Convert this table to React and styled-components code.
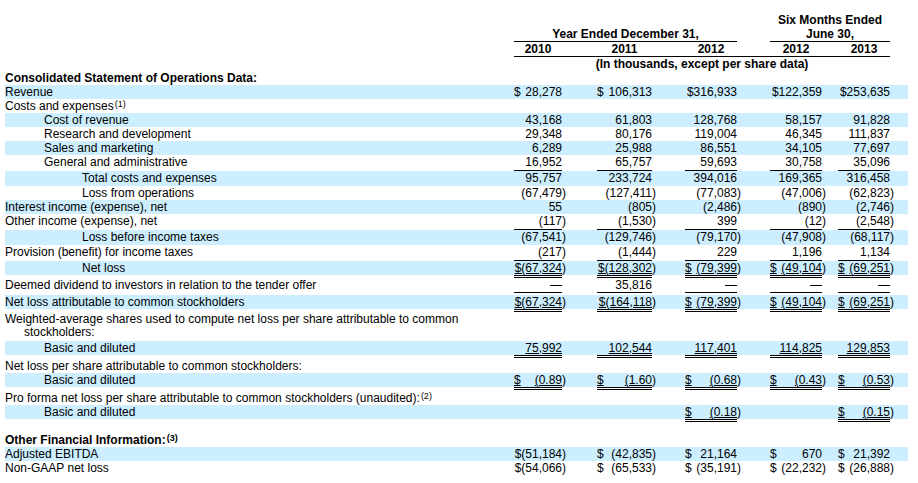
import React from 'react';
import styled, { createGlobalStyle } from 'styled-components';

const GlobalStyle = createGlobalStyle`
  body {
    margin: 0;
    background: #ffffff;
    color: #000000;
    font-family: "Liberation Sans", Arial, Helvetica, sans-serif;
    font-size: 12px;
  }
`;

// label column + five figure columns (each holds its figure box and the gap after it)
const COLS = '509px 83px 88px 85px 68px 70px';
const BOX = [48, 55, 52, 52, 52];

const Sheet = styled.div`
  width: 903px;
  margin-left: 5px;
  padding-top: 13px;
`;

const HeadRow = styled.div`
  display: grid;
  grid-template-columns: ${COLS};
  line-height: 14px;
  font-weight: 700;
`;

const HeadCell = styled.div`
  grid-column: ${p => p.$span};
  margin-right: ${p => p.$mr || 0}px;
  text-align: center;
  white-space: nowrap;
  border-bottom: ${p => (p.$rule ? '1px solid #000' : 'none')};
`;

const YearStrip = styled.div`
  grid-column: 2 / 7;
  margin-right: 18px;
  display: grid;
  grid-template-columns: 83px 88px 85px 68px 52px;
  border-bottom: 1px solid #000;
`;

const Year = styled.div`
  width: ${p => p.$w}px;
  text-align: center;
`;

const Row = styled.div`
  display: grid;
  grid-template-columns: ${COLS};
  align-items: start;
  line-height: 14px;
  margin-top: ${p => p.$mt || 0}px;
  margin-bottom: ${p => p.$mb || 0}px;
  padding-bottom: ${p => p.$pb || 0}px;
  background: ${p =>
    p.$band ? `linear-gradient(#cceeff, #cceeff) top left / 100% ${14 + (p.$pb || 0)}px no-repeat` : 'none'};
`;

const Label = styled.div`
  padding-left: ${p => [0, 39, 77][p.$indent || 0]}px;
  font-weight: ${p => (p.$bold ? 700 : 400)};
  white-space: nowrap;
`;

const WrapLabel = styled.div`
  line-height: 13px;
  white-space: nowrap;
`;

const Continued = styled.span`
  display: inline-block;
  padding-left: 19px;
`;

const Note = styled.sup`
  font-size: 9px;
  line-height: 0;
  vertical-align: 3px;
  margin-left: 1px;
`;

const Cell = styled.div`
  display: flex;
  align-items: flex-start;
`;

const Figure = styled.div`
  width: ${p => p.$w}px;
  height: 14px;
  display: flex;
  justify-content: ${p => (p.$spread ? 'space-between' : 'flex-end')};
  white-space: nowrap;
  padding-bottom: ${p => (p.$line === 'single' ? p.$pad || 0 : 0)}px;
  border-bottom: ${p =>
    p.$line === 'single' ? '1px solid #000' : p.$line === 'double' ? '3px double #000' : 'none'};
  text-decoration: ${p => (p.$line === 'double' ? 'underline' : 'none')};
`;

const Hang = styled.span`
  white-space: nowrap;
`;

const rows = [
  { label: 'Consolidated Statement of Operations Data:', bold: true },
  { label: 'Revenue', band: true, values: ['$ 28,278', '$ 106,313', '$316,933', '$122,359', '$253,635'] },
  { label: 'Costs and expenses', note: '(1)' },
  { label: 'Cost of revenue', indent: 1, band: true, values: ['43,168', '61,803', '128,768', '58,157', '91,828'] },
  { label: 'Research and development', indent: 1, values: ['29,348', '80,176', '119,004', '46,345', '111,837'] },
  { label: 'Sales and marketing', indent: 1, band: true, values: ['6,289', '25,988', '86,551', '34,105', '77,697'] },
  { label: 'General and administrative', indent: 1, line: 'single', pad: 1, values: ['16,952', '65,757', '59,693', '30,758', '35,096'] },
  { label: 'Total costs and expenses', indent: 2, band: true, pb: 1, values: ['95,757', '233,724', '394,016', '169,365', '316,458'] },
  { label: 'Loss from operations', indent: 2, values: ['(67,479)', '(127,411)', '(77,083)', '(47,006)', '(62,823)'] },
  { label: 'Interest income (expense), net', band: true, values: ['55', '(805)', '(2,486)', '(890)', '(2,746)'] },
  { label: 'Other income (expense), net', line: 'single', pad: 1, values: ['(117)', '(1,530)', '399', '(12)', '(2,548)'] },
  { label: 'Loss before income taxes', indent: 2, band: true, pb: 1, values: ['(67,541)', '(129,746)', '(79,170)', '(47,908)', '(68,117)'] },
  { label: 'Provision (benefit) for income taxes', line: 'single', pad: 1, values: ['(217)', '(1,444)', '229', '1,196', '1,134'] },
  { label: 'Net loss', indent: 2, band: true, line: 'double', values: ['$(67,324)', '$(128,302)', '$ (79,399)', '$ (49,104)', '$ (69,251)'] },
  { label: 'Deemed dividend to investors in relation to the tender offer', line: 'single', mb: 2, values: ['—', '35,816', '—', '—', '—'] },
  { label: 'Net loss attributable to common stockholders', band: true, line: 'double', values: ['$(67,324)', '$(164,118)', '$ (79,399)', '$ (49,104)', '$ (69,251)'] },
  { wrap: ['Weighted-average shares used to compute net loss per share attributable to common', 'stockholders:'], mt: 1, mb: 2 },
  { label: 'Basic and diluted', indent: 1, band: true, line: 'double', values: ['75,992', '102,544', '117,401', '114,825', '129,853'] },
  { label: 'Net loss per share attributable to common stockholders:', mt: 1 },
  { label: 'Basic and diluted', indent: 1, band: true, line: 'double', values: ['$ (0.89)', '$ (1.60)', '$ (0.68)', '$ (0.43)', '$ (0.53)'] },
  { label: 'Pro forma net loss per share attributable to common stockholders (unaudited):', note: '(2)', mt: 1 },
  { label: 'Basic and diluted', indent: 1, band: true, line: 'double', values: [null, null, '$ (0.18)', null, '$ (0.15)'] },
  { label: 'Other Financial Information:', note: '(3)', bold: true, mt: 11 },
  { label: 'Adjusted EBITDA', band: true, values: ['$(51,184)', '$ (42,835)', '$ 21,164', '$ 670', '$ 21,392'] },
  { label: 'Non-GAAP net loss', values: ['$(54,066)', '$ (65,533)', '$ (35,191)', '$ (22,232)', '$ (26,888)'] },
];

const years = ['2010', '2011', '2012', '2012', '2013'];

const FigureCell = ({ value, width, line, pad }) => {
  if (value == null) return <Cell />;
  let body = value;
  let spread = false;
  if (body.startsWith('$ ')) {
    spread = true;
    body = body.slice(2).trim();
  }
  let hang = '';
  if (body.endsWith(')')) {
    hang = ')';
    body = body.slice(0, -1);
  }
  return (
    <Cell>
      <Figure $w={width} $spread={spread} $line={line} $pad={pad}>
        {spread && <span>$</span>}
        <span>{body}</span>
      </Figure>
      {hang && <Hang>{hang}</Hang>}
    </Cell>
  );
};

const App = () => (
  <>
    <GlobalStyle />
    <Sheet>
      <HeadRow>
        <HeadCell $span="5 / 7" $mr={18}>Six Months Ended</HeadCell>
      </HeadRow>
      <HeadRow>
        <HeadCell $span="2 / 5" $mr={33} $rule>Year Ended December 31,</HeadCell>
        <HeadCell $span="5 / 7" $mr={18} $rule>June 30,</HeadCell>
      </HeadRow>
      <HeadRow>
        <YearStrip>
          {years.map((y, i) => (
            <Year key={i} $w={BOX[i]}>{y}</Year>
          ))}
        </YearStrip>
      </HeadRow>
      <HeadRow>
        <HeadCell $span="2 / 7" $mr={18}>(In thousands, except per share data)</HeadCell>
      </HeadRow>

      {rows.map((r, i) => (
        <Row key={i} $band={r.band} $mt={r.mt} $mb={r.mb} $pb={r.pb}>
          {r.wrap ? (
            <WrapLabel>
              {r.wrap[0]}
              <br />
              <Continued>{r.wrap[1]}</Continued>
            </WrapLabel>
          ) : (
            <Label $indent={r.indent} $bold={r.bold}>
              {r.label}
              {r.note && <Note>{r.note}</Note>}
            </Label>
          )}
          {r.values &&
            r.values.map((v, j) => (
              <FigureCell key={j} value={v} width={BOX[j]} line={r.line} pad={r.pad} />
            ))}
        </Row>
      ))}
    </Sheet>
  </>
);

export default App;
